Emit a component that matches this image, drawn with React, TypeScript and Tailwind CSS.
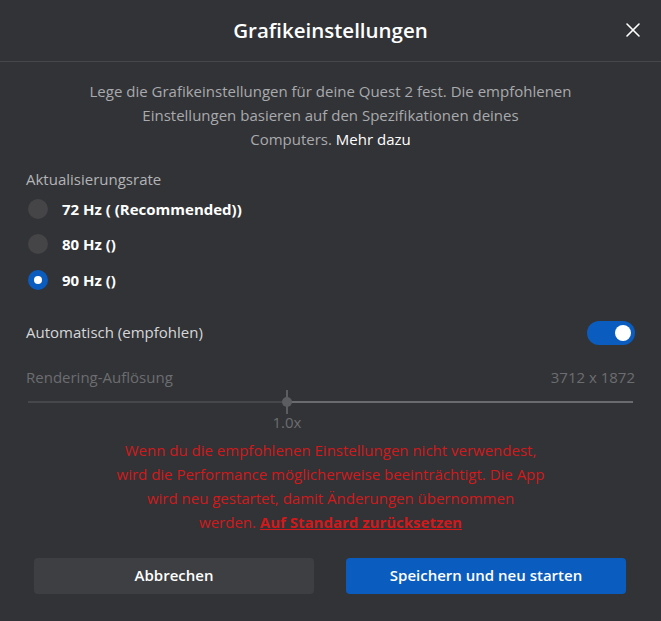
import { X } from 'lucide-react';

const rates = [
  { label: '72 Hz ( (Recommended))', selected: false },
  { label: '80 Hz ()', selected: false },
  { label: '90 Hz ()', selected: true },
];

const Radio = ({ selected }: { selected: boolean }) =>
  selected ? (
    <div className="w-5 h-5 rounded-full bg-[#0a5cbf] flex items-center justify-center">
      <div className="w-2 h-2 rounded-full bg-white" />
    </div>
  ) : (
    <div className="w-5 h-5 rounded-full bg-[#454548]" />
  );

export default function App() {
  return (
    <div
      className="w-[661px] h-[621px] bg-[#323336] text-white flex flex-col"
      style={{ fontFamily: '"Open Sans", "Noto Sans", sans-serif' }}
    >
      {/* Header */}
      <div className="h-[62px] relative flex items-center justify-center border-b border-[#46474a]">
        <h1 className="text-[20.5px] font-semibold">Grafikeinstellungen</h1>
        <button className="absolute right-[16px] top-[18px] text-white">
          <X size={24} strokeWidth={1.6} />
        </button>
      </div>

      <div className="px-[26px] flex flex-col">
        {/* Description */}
        <p className="mt-[17px] text-center text-[15px] leading-[24px] text-[#a9aaad]">
          Lege die Grafikeinstellungen für deine Quest 2 fest. Die empfohlenen
          <br />
          Einstellungen basieren auf den Spezifikationen deines
          <br />
          Computers. <span className="text-white">Mehr dazu</span>
        </p>

        {/* Refresh rate */}
        <div className="mt-[18px] text-[15px] leading-[20px] text-[#b3b4b7]">Aktualisierungsrate</div>
        <div className="mt-[2px] flex flex-col">
          {rates.map((r) => (
            <div key={r.label} className="h-[35.5px] flex items-center gap-[14px] pl-[2px]">
              <Radio selected={r.selected} />
              <span className="text-[15px] font-bold text-white">{r.label}</span>
            </div>
          ))}
        </div>

        {/* Auto toggle */}
        <div className="mt-[23px] flex items-center justify-between h-[24px]">
          <span className="text-[15px] text-[#d6d7d9]">Automatisch (empfohlen)</span>
          <div className="w-[48px] h-[24px] rounded-full bg-[#0a5cbf] flex items-center justify-end pr-[4px]">
            <div className="w-[16px] h-[16px] rounded-full bg-white" />
          </div>
        </div>

        {/* Rendering resolution */}
        <div className="mt-[22px] flex items-center justify-between text-[15px] leading-[20px] text-[#6c6d70]">
          <span>Rendering-Auflösung</span>
          <span>3712 x 1872</span>
        </div>

        {/* Slider */}
        <div className="mt-[3px] relative h-[24px] flex items-center px-[2px]">
          <div className="h-[2px] w-[259px] bg-[#46474a]" />
          <div className="h-[2px] flex-1 bg-[#6a6b6e]" />
          <div className="absolute left-[260px] top-0 w-[2px] h-[24px] bg-[#5c5d60]" />
          <div className="absolute left-[256px] top-[7px] w-[10px] h-[10px] rounded-full bg-[#5c5d60]" />
        </div>
        <div className="relative h-[18px]">
          <span className="absolute left-[261px] -translate-x-1/2 -top-[2px] text-[15px] leading-[20px] text-[#6c6d70]">
            1.0x
          </span>
        </div>

        {/* Warning */}
        <p className="mt-[6px] text-center text-[15px] leading-[24px] text-[#d1191c]">
          Wenn du die empfohlenen Einstellungen nicht verwendest,
          <br />
          wird die Performance möglicherweise beeinträchtigt. Die App
          <br />
          wird neu gestartet, damit Änderungen übernommen
          <br />
          werden. <span className="font-bold underline">Auf Standard zurücksetzen</span>
        </p>

        {/* Buttons */}
        <div className="mt-[24px] flex gap-[32px] px-[8px]">
          <button className="w-[280px] h-[36px] rounded-[4px] bg-[#3e3f42] text-[15px] font-semibold text-white">
            Abbrechen
          </button>
          <button className="w-[280px] h-[36px] rounded-[4px] bg-[#0a5cbf] text-[15px] font-semibold text-white">
            Speichern und neu starten
          </button>
        </div>
      </div>
    </div>
  );
}
